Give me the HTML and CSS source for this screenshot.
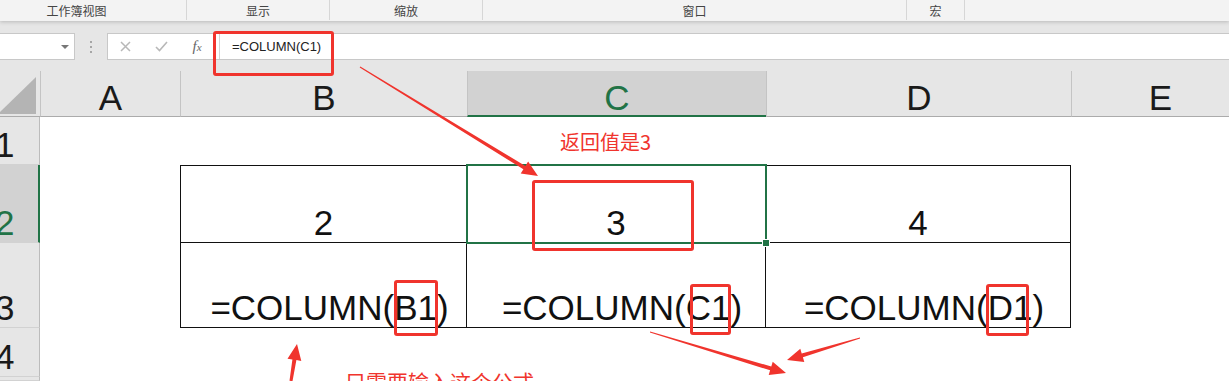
FILE: index.html
```html
<!DOCTYPE html>
<html lang="zh-CN">
<head>
  <meta charset="UTF-8" />
  <title>COLUMN</title>
  <link rel="stylesheet" href="styles.css">
</head>
<body>
  <div class="ribbon">
    <div class="group g1">工作簿视图</div>
    <div class="group g2">显示</div>
    <div class="group g3">缩放</div>
    <div class="group g4">窗口</div>
    <div class="group g5">宏</div>
  </div>

  <div class="formula-bar">
    <div class="name-box"><span class="caret"></span></div>
    <div class="grip"><i></i><i></i><i></i></div>
    <div class="formula-box">
      <span class="fb-btn">
        <svg width="11" height="11" viewBox="0 0 11 11"><path d="M1 1L10 10M10 1L1 10" stroke="#b8b8b8" stroke-width="1.5" fill="none"/></svg>
      </span>
      <span class="fb-btn">
        <svg width="13" height="11" viewBox="0 0 13 11"><path d="M1 6L4.5 9.5L12 1" stroke="#b8b8b8" stroke-width="1.6" fill="none"/></svg>
      </span>
      <span class="fb-btn fx"><i>f</i><sub>x</sub></span>
      <span class="fb-divider"></span>
      <span class="fb-text">=COLUMN(C1)</span>
    </div>
  </div>

  <div class="sheet">
    <div class="corner">
      <svg width="40" height="46" viewBox="0 0 40 46"><polygon points="36,6 36,43 -2,43" fill="#b4b4b4"/></svg>
    </div>
    <div class="col-head">A</div>
    <div class="col-head">B</div>
    <div class="col-head active">C</div>
    <div class="col-head">D</div>
    <div class="col-head">E</div>

    <div class="row-head">1</div>
    <div class="cell"></div><div class="cell"></div><div class="cell"></div><div class="cell"></div><div class="cell"></div>

    <div class="row-head active">2</div>
    <div class="cell"></div>
    <div class="cell box first top">2</div>
    <div class="cell box top selected">3<span class="selection"><span class="handle"></span></span></div>
    <div class="cell box top">4</div>
    <div class="cell"></div>

    <div class="row-head">3</div>
    <div class="cell"></div>
    <div class="cell box first formula">=COLUMN(B1)</div>
    <div class="cell box formula">=COLUMN(C1)</div>
    <div class="cell box formula">=COLUMN(D1)</div>
    <div class="cell"></div>

    <div class="row-head">4</div>
    <div class="cell"></div><div class="cell"></div><div class="cell"></div><div class="cell"></div><div class="cell"></div>

    <div class="row-head"></div>
    <div class="cell"></div><div class="cell"></div><div class="cell"></div><div class="cell"></div><div class="cell"></div>
  </div>

  <!-- red annotations drawn over the sheet -->
  <div class="notes">
    <svg class="arrows" width="1229" height="381" viewBox="0 0 1229 381">
      <polygon fill="#f0342d" points="359.7,67.4 523.4,169.3 520.7,173.6 538,176 528.1,161.6 525.4,165.9 360.3,66.6"/>
      <polygon fill="#f0342d" points="649.9,332.5 770.1,370.3 768.7,375.1 786,373 772.7,361.7 771.3,366.5 650.1,331.5"/>
      <polygon fill="#f0342d" points="859.9,337.5 801.7,353.5 800.3,348.7 787,360 804.3,362.1 802.9,357.3 860.1,338.5"/>
      <polygon fill="#f0342d" points="292.5,381.2 296.4,360.1 301.3,360.9 297,344 287.5,358.7 292.4,359.5 289.5,380.8"/>
    </svg>
    <div class="mark mark-formula"></div>
    <div class="mark mark-result"></div>
    <div class="mark mark-b1"></div>
    <div class="mark mark-c1"></div>
    <div class="mark mark-d1"></div>
    <div class="note note-result">返回值是3</div>
    <div class="note note-input">只需要输入这个公式</div>
  </div>
</body>
</html>
```

FILE: styles.css
```css
body {
  margin: 0;
  width: 1229px;
  height: 381px;
  overflow: hidden;
  position: relative;
  background-color: #ffffff;
  font-family: "Liberation Sans", Arial, sans-serif;
}

/* ribbon group labels */
.ribbon {
  position: relative;
  z-index: 1;
  display: flex;
  height: 21px;
  background-color: #f3f3f3;
  box-shadow: 0 1px 4px rgba(0, 0, 0, 0.2);
  font-family: "Noto Sans CJK SC", sans-serif;
  font-size: 12px;
  color: #444;
}

.group {
  box-sizing: border-box;
  height: 20px;
  line-height: 21px;
  text-align: center;
  border-right: 1px solid #d6d6d6;
}

.g1 { width: 187px; padding-right: 33px; }
.g2 { width: 143px; }
.g3 { width: 153px; }
.g4 { width: 424px; }
.g5 { width: 58px; }

/* name box + formula input */
.formula-bar {
  display: flex;
  box-sizing: border-box;
  height: 50px;
  padding-top: 12px;
  background-color: #e6e6e6;
}

.name-box {
  box-sizing: border-box;
  width: 75px;
  height: 27px;
  background-color: #fff;
  border: 1px solid #c8c8c8;
  border-left: none;
  display: flex;
  align-items: center;
  justify-content: flex-end;
  padding-right: 5px;
}

.caret {
  width: 0;
  height: 0;
  border-left: 4px solid transparent;
  border-right: 4px solid transparent;
  border-top: 4px solid #777;
}

.grip {
  width: 32px;
  height: 27px;
  display: flex;
  flex-direction: column;
  align-items: center;
  justify-content: center;
  gap: 3px;
}

.grip i {
  width: 2px;
  height: 2px;
  background-color: #a6a6a6;
}

.formula-box {
  flex: 1;
  box-sizing: border-box;
  height: 27px;
  background-color: #fff;
  border: 1px solid #c8c8c8;
  border-right: none;
  display: flex;
  align-items: center;
}

.fb-btn {
  width: 36px;
  display: flex;
  justify-content: center;
  align-items: center;
}

.fb-btn:first-child {
  width: 35px;
}

.fx {
  font-family: "Liberation Serif", serif;
  color: #666;
  font-size: 15px;
}

.fx sub {
  font-size: 11px;
  font-style: italic;
  vertical-align: -2px;
}

.fb-divider {
  width: 1px;
  height: 25px;
  margin-left: 4px;
  background-color: #d4d4d4;
}

.fb-text {
  padding-left: 12px;
  font-size: 13px;
  color: #222;
}

/* worksheet */
.sheet {
  display: grid;
  grid-template-columns: 40px 140px 287px 299px 305px 178px;
  grid-template-rows: 46px 48px 78px 85px 49px 1fr;
  height: 310px;
}

.corner {
  background-color: #e6e6e6;
  border-bottom: 1px solid #ababab;
  box-sizing: border-box;
  overflow: hidden;
}

.col-head {
  box-sizing: border-box;
  background-color: #e6e6e6;
  border-bottom: 1px solid #ababab;
  border-left: 1px solid #c4c4c4;
  font-size: 35px;
  line-height: 1;
  color: #1a1a1a;
  display: flex;
  justify-content: center;
  align-items: flex-end;
  padding-bottom: 1px;
}

.col-head.active {
  background-color: #d2d2d2;
  color: #217346;
  border-bottom: 2px solid #217346;
  padding-bottom: 0;
}

.row-head {
  box-sizing: border-box;
  background-color: #e6e6e6;
  border-right: 1px solid #bcbcbc;
  border-bottom: 1px solid #d2d2d2;
  font-size: 35px;
  line-height: 1;
  color: #1a1a1a;
  display: flex;
  align-items: flex-end;
  padding-bottom: 2px;
  text-indent: -5px;
  overflow: hidden;
}

.row-head.active {
  background-color: #d2d2d2;
  color: #217346;
  border-right: 2px solid #217346;
}

.cell {
  box-sizing: border-box;
  font-size: 35px;
  line-height: 1;
  color: #111;
  display: flex;
  justify-content: center;
  align-items: flex-end;
  padding-bottom: 2px;
}

.box {
  border-right: 1px solid #111;
  border-bottom: 1px solid #111;
}

.box.first {
  border-left: 1px solid #111;
}

.box.top {
  border-top: 1px solid #111;
}

.formula {
  padding-left: 12px;
}

.selected {
  position: relative;
}

.selection {
  position: absolute;
  top: -2px;
  left: -1px;
  right: -2px;
  bottom: -2px;
  border: 2px solid #217346;
}

.handle {
  position: absolute;
  right: -5px;
  bottom: -5px;
  width: 6px;
  height: 6px;
  background-color: #217346;
  border: 1px solid #fff;
}

/* annotations */
.notes {
  position: absolute;
  top: 0;
  left: 0;
  width: 1229px;
  height: 381px;
  z-index: 2;
  pointer-events: none;
}

.arrows {
  position: absolute;
  top: 0;
  left: 0;
}

.mark {
  position: absolute;
  box-sizing: border-box;
  border: 3px solid #f0342d;
  border-radius: 3px;
}

.mark-formula { left: 213px; top: 31px; width: 121px; height: 45px; }
.mark-result { left: 532px; top: 180px; width: 162px; height: 71px; }
.mark-b1 { left: 394px; top: 280px; width: 44px; height: 56px; }
.mark-c1 { left: 690px; top: 284px; width: 41px; height: 51px; }
.mark-d1 { left: 986px; top: 284px; width: 43px; height: 52px; }

.note {
  position: absolute;
  font-family: "Noto Sans CJK SC", sans-serif;
  line-height: 1;
  color: #f0342d;
  white-space: nowrap;
}

.note-result {
  left: 560px;
  top: 132px;
  font-size: 20px;
}

.note-input {
  left: 345px;
  top: 371px;
  font-size: 21px;
}
```
